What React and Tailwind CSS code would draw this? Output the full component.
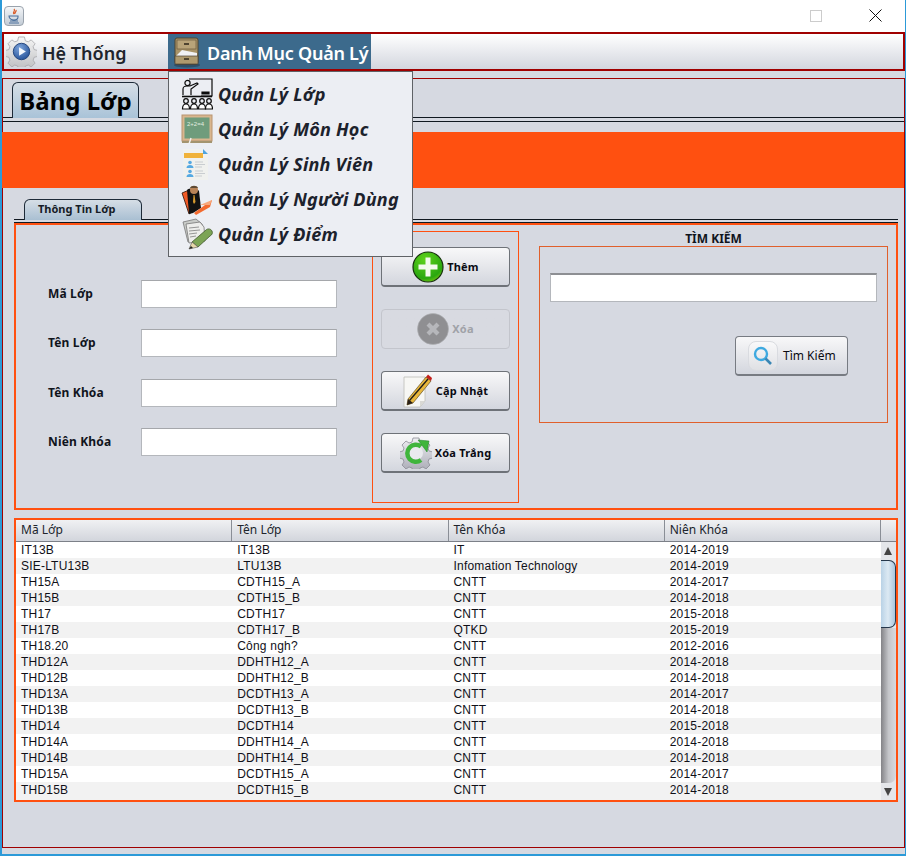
import React from "react";

const rows = [
  ["IT13B", "IT13B", "IT", "2014-2019"],
  ["SIE-LTU13B", "LTU13B", "Infomation Technology", "2014-2019"],
  ["TH15A", "CDTH15_A", "CNTT", "2014-2017"],
  ["TH15B", "CDTH15_B", "CNTT", "2014-2018"],
  ["TH17", "CDTH17", "CNTT", "2015-2018"],
  ["TH17B", "CDTH17_B", "QTKD", "2015-2019"],
  ["TH18.20", "Công ngh?", "CNTT", "2012-2016"],
  ["THD12A", "DDHTH12_A", "CNTT", "2014-2018"],
  ["THD12B", "DDHTH12_B", "CNTT", "2014-2018"],
  ["THD13A", "DCDTH13_A", "CNTT", "2014-2017"],
  ["THD13B", "DCDTH13_B", "CNTT", "2014-2018"],
  ["THD14", "DCDTH14", "CNTT", "2015-2018"],
  ["THD14A", "DDHTH14_A", "CNTT", "2014-2018"],
  ["THD14B", "DDHTH14_B", "CNTT", "2014-2018"],
  ["THD15A", "DCDTH15_A", "CNTT", "2014-2017"],
  ["THD15B", "DCDTH15_B", "CNTT", "2014-2018"],
];

const columns = ["Mã Lớp", "Tên Lớp", "Tên Khóa", "Niên Khóa"];
const fields = ["Mã Lớp", "Tên Lớp", "Tên Khóa", "Niên Khóa"];

const gearPath =
  "M13 1h6l1 4 3 1 3-2 4 4-2 3 1 3 4 1v6l-4 1-1 3 2 3-4 4-3-2-3 1-1 4h-6l-1-4-3-1-3 2-4-4 2-3-1-3-4-1v-6l4-1 1-3-2-3 4-4 3 2 3-1z";

const JavaIcon = () => (
  <div className="w-5 h-5 rounded-sm border border-[#9aa3ad] bg-gradient-to-b from-[#f4f6f8] to-[#c3ccd6] flex items-center justify-center">
    <svg width="14" height="16" viewBox="0 0 14 16">
      <path d="M7 1c2 2-2 3 0 5M9 2c1 2-2 2-1 4" fill="none" stroke="#d9541e" strokeWidth="1.2" />
      <path d="M2 8h9v1c0 2-2 3-4 3s-5-1-5-4z M3 13h8M2 15h10" fill="none" stroke="#4a6f9c" strokeWidth="1.1" />
    </svg>
  </div>
);

const GearPlayIcon = () => (
  <svg width="31" height="31" viewBox="0 0 32 32">
    <defs>
      <linearGradient id="gearGrey" x1="0" y1="0" x2="0" y2="1">
        <stop offset="0" stopColor="#f6f6f6" />
        <stop offset="1" stopColor="#bdbec1" />
      </linearGradient>
      <radialGradient id="playBlue" cx="0.4" cy="0.3" r="0.8">
        <stop offset="0" stopColor="#7fa6dc" />
        <stop offset="1" stopColor="#1d4a93" />
      </radialGradient>
    </defs>
    <path d={gearPath} fill="url(#gearGrey)" stroke="#a5a5a8" strokeWidth="0.8" />
    <circle cx="16" cy="16" r="8.500" fill="url(#playBlue)" stroke="#24457c" strokeWidth="1" />
    <path d="M13.500 11.500l7 4.500-7 4.500z" fill="#f5f8fd" />
  </svg>
);

const CabinetIcon = () => (
  <svg width="28" height="32" viewBox="0 0 28 32">
    <ellipse cx="14" cy="29" rx="13" ry="2.5" fill="#23394a" opacity="0.55" />
    <rect x="2" y="2" width="23" height="26" rx="2" fill="#a99468" stroke="#4f4430" />
    <rect x="4" y="4" width="19" height="9" fill="#b9a479" stroke="#6b5b3d" strokeWidth="0.7" />
    <rect x="11" y="7" width="5" height="2" fill="#4f4430" />
    <path d="M3 20l6-6 15 3v3z" fill="#f1f2f4" />
    <path d="M2 20h23v8H2z" fill="#ae9a6e" stroke="#4f4430" strokeWidth="0.7" />
    <rect x="11" y="22" width="5" height="2" fill="#4f4430" />
  </svg>
);

const TeacherIcon = () => (
  <svg width="32" height="32" viewBox="0 0 32 32" fill="none" stroke="#0c0c0c" strokeWidth="1.2">
    <path d="M8 1h23v17H20" />
    <circle cx="6.500" cy="5" r="2.600" />
    <path d="M2 17v-6c0-2 2-3 4-3h3l7-3 1 1-7 5v6" />
    <path d="M21 14h7v2h-7z" fill="#0c0c0c" />
    <path d="M1 18.500h30" strokeWidth="1.6" />
    {[5, 13, 21, 28].map((x) => (
      <g key={x}>
        <circle cx={x} cy="23" r="2.300" />
        <path d="M1.500 31c0-3 1-5 3.500-5s3.500 2 3.500 5z" fill="#fff" transform={`translate(${x - 5} 0)`} />
      </g>
    ))}
  </svg>
);

const BoardIcon = () => (
  <svg width="32" height="32" viewBox="0 0 32 32">
    <rect x="1" y="2" width="30" height="26" fill="#d9b68e" stroke="#b89470" />
    <rect x="3.500" y="4.500" width="25" height="21" fill="#6f9c7c" />
    <text x="6" y="13" fontSize="6" fill="#e3eee0" fontFamily="Liberation Sans, sans-serif">2+2=4</text>
    <path d="M1 28h30v2H1z" fill="#a3946f" />
    <path d="M8 31l2-6" stroke="#f2f2f2" strokeWidth="1.400" />
  </svg>
);

const CardIcon = () => (
  <svg width="28" height="32" viewBox="0 0 28 32">
    <path d="M2 1h20l5 5v26H2z" fill="#f0f1ee" />
    <path d="M3 5h19v5H3z" fill="#f0b23a" />
    <path d="M22 1l5 5h-5z" fill="#4ea4e0" />
    {[13, 22].map((y) => (
      <g key={y}>
        <circle cx="9" cy={y + 1.500} r="1.800" fill="#55a9e2" />
        <path d={`M5.500 ${y + 7}c0-2 1.500-3 3.500-3s3.500 1 3.500 3z`} fill="#55a9e2" />
        <path d={`M14 ${y + 1}h8M14 ${y + 3.500}h10M14 ${y + 6}h7`} stroke="#c9cdd0" strokeWidth="1" />
      </g>
    ))}
  </svg>
);

const UserFolderIcon = () => (
  <svg width="32" height="32" viewBox="0 0 32 32">
    <path d="M1 10l7-3 3 22-3 2z" fill="#f05a26" stroke="#2b1208" strokeWidth="0.8" />
    <path d="M6 7c2-2 10-2 12 1l2 17-8 5-4 1z" fill="#121212" />
    <circle cx="13" cy="7" r="4" fill="#b98458" />
    <path d="M9 5c1-3 7-3 8 0z" fill="#5d4a35" />
    <path d="M12.500 12h1l1 7-1.500 2-1-2z" fill="#d79b2f" />
    <path d="M13 30l18-13-2 7-14 8z" fill="#f36a2e" />
    <path d="M19 22l12-5-2 5z" fill="#f8a77a" />
  </svg>
);

const GradesIcon = () => (
  <svg width="32" height="32" viewBox="0 0 32 32">
    <path d="M2 4l13-3 6 5 3 14-17 4z" fill="#c9cbc8" stroke="#777" strokeWidth="0.8" />
    <path d="M5 6l14-2 4 5 1 14-16 2z" fill="#ededeb" stroke="#777" strokeWidth="0.8" />
    <path d="M8 10l10-1M8 13l11-1M8 16l8-1M9 19l6-1" stroke="#8b8b8b" strokeWidth="0.9" />
    <path d="M11 24L25 12c2-2 5-1 6 1s0 4-2 5L17 29z" fill="#7ca455" stroke="#425b2d" strokeWidth="0.8" />
    <path d="M11 24l6 5-9 2z" fill="#e6d7a8" stroke="#555" strokeWidth="0.6" />
    <path d="M8 31l2-3 2 2z" fill="#222" />
  </svg>
);

const PlusIcon = () => (
  <svg width="32" height="32" viewBox="0 0 32 32">
    <defs>
      <radialGradient id="plusGreen" cx="0.4" cy="0.25" r="0.9">
        <stop offset="0" stopColor="#5fd21c" />
        <stop offset="0.7" stopColor="#2aa70f" />
        <stop offset="1" stopColor="#a4da12" />
      </radialGradient>
    </defs>
    <circle cx="16" cy="16" r="15" fill="url(#plusGreen)" stroke="#17300e" strokeWidth="1.200" />
    <path d="M13.500 6.500h5v7h7v5h-7v7h-5v-7h-7v-5h7z" fill="#f4faee" />
  </svg>
);

const DisabledDeleteIcon = () => (
  <svg width="32" height="32" viewBox="0 0 32 32">
    <circle cx="16" cy="16" r="15.500" fill="#8f8f92" stroke="#aeb0b4" strokeWidth="0.6" />
    <path d="M9.500 12.500l3-3 3.500 3.500 3.500-3.500 3 3-3.500 3.500 3.500 3.500-3 3-3.500-3.500-3.500 3.500-3-3 3.500-3.500z" fill="#b6b7bb" />
  </svg>
);

const PencilIcon = () => (
  <svg width="30" height="34" viewBox="0 0 30 34">
    <path d="M1 3l21 0v24l-5 6H1z" fill="#f7f7f4" stroke="#bcbcb8" strokeWidth="0.8" />
    <path d="M22 27l-5 6v-6z" fill="#d9d9d5" />
    <path d="M5 25L23 3l5 4-18 22-6 2z" fill="#e8b73c" stroke="#4a3a18" strokeWidth="0.6" />
    <path d="M6.500 26.500L25 5" stroke="#1c1c1c" strokeWidth="1.300" />
    <path d="M23 3l2-2.500 4 3.500-1 3z" fill="#c3201c" />
    <path d="M4 31l1-6 5 4z" fill="#2a2118" />
  </svg>
);

const ResetIcon = () => (
  <svg width="32" height="32" viewBox="0 0 32 32">
    <defs>
      <linearGradient id="resetGrey" x1="0" y1="0" x2="0" y2="1">
        <stop offset="0" stopColor="#eeeef2" />
        <stop offset="1" stopColor="#a8a9b4" />
      </linearGradient>
    </defs>
    <path d={gearPath} fill="url(#resetGrey)" stroke="#8b8c96" strokeWidth="0.8" />
    <circle cx="16" cy="16" r="7" fill="#e9eaee" />
    <path d="M21 9.500A8.500 8.500 0 1 0 21 23" fill="none" stroke="#3fb53c" strokeWidth="4.500" />
    <path d="M18 3l11 1-2 11z" fill="#3fb53c" stroke="#1c7d27" strokeWidth="0.5" />
  </svg>
);

const SearchIcon = () => (
  <div className="w-[30px] h-[30px] rounded-lg border border-[#d9dbe0] bg-gradient-to-b from-[#f9f9fa] to-[#dfe0e4] flex items-center justify-center">
    <svg width="20" height="20" viewBox="0 0 20 20" fill="none">
      <circle cx="8" cy="8" r="6" stroke="#3ea9e0" strokeWidth="2.400" />
      <path d="M12.500 12.500l5.500 5.500" stroke="#3a86b4" strokeWidth="2.600" />
    </svg>
  </div>
);

const MenuItem = ({ icon, label }) => (
  <div className="h-[35px] flex items-center">
    <div className="w-[49px] pl-[12px] flex justify-start">{icon}</div>
    <span className="text-[18px] leading-none font-bold italic tracking-[0.2px] text-[#1c222c]">{label}</span>
  </div>
);

const ActionButton = ({ icon, label, disabled }) => (
  <button
    className={`w-[129px] h-[40px] rounded-[4px] border flex items-center justify-center gap-[3px] bg-gradient-to-b ${
      disabled
        ? "border-[#c3c5cc] from-[#d8dae1] to-[#d8dae1] text-[#a0a2a8]"
        : "border-[#6e7278] border-b-2 from-[#f8f8f9] via-[#e6e7eb] to-[#d3d6de] text-[#0a0a12]"
    }`}
  >
    {icon}
    <span className="pt-[1px] text-[11px] font-bold tracking-[0.2px]">{label}</span>
  </button>
);

const menuItems = [
  [<TeacherIcon />, "Quản Lý Lớp"],
  [<BoardIcon />, "Quản Lý Môn Học"],
  [<CardIcon />, "Quản Lý Sinh Viên"],
  [<UserFolderIcon />, "Quản Lý Người Dùng"],
  [<GradesIcon />, "Quản Lý Điểm"],
];

export default function App() {
  return (
    <div className="w-[910px] h-[858px] bg-white overflow-hidden font-['Noto_Sans',sans-serif]">
      <div className="relative w-[906px] h-[856px] border-l-2 border-r border-b-2 border-[#2c9ad8] flex flex-col">
        {/* title bar */}
        <div className="h-[32px] shrink-0 flex items-center pl-[2px] pb-[1px]">
          <JavaIcon />
          <div className="ml-auto mr-[47px] w-[12px] h-[12px] border border-[#cccccc]" />
          <svg className="mr-[23px]" width="13" height="13" viewBox="0 0 13 13">
            <path d="M.5.5l12 12M12.500.5l-12 12" stroke="#111" strokeWidth="1" />
          </svg>
        </div>

        {/* menu bar */}
        <div className="h-[39px] shrink-0 border-2 border-[#a00000] flex items-stretch bg-gradient-to-b from-white to-[#d3d6de] text-[18px] font-semibold text-[#20242c]">
          <div className="w-[164px] flex items-center pl-[2px] gap-[5px]">
            <GearPlayIcon />
            <span className="pt-[3px]">Hệ Thống</span>
          </div>
          <div className="w-[203px] bg-[#3c6a8c] flex items-center pl-[5px] gap-[6px] text-white whitespace-nowrap">
            <CabinetIcon />
            <span className="pt-[3px] tracking-[-0.25px]">Danh Mục Quản Lý</span>
          </div>
        </div>

        {/* dropdown */}
        <div className="absolute left-[166px] top-[71px] z-10 w-[245px] h-[186px] border border-[#5f6266] bg-[#eceef3] flex flex-col pt-[4px]">
          {menuItems.map(([icon, label]) => (
            <MenuItem key={label} icon={icon} label={label} />
          ))}
        </div>

        {/* body */}
        <div className="flex-1 bg-[#d6d9e1] pt-[7px] pb-[6px]">
          <div className="h-full border border-[#a00000] flex flex-col">
            {/* main tab */}
            <div className="h-[39px] shrink-0 pt-[3px] pl-[9px] border-b border-[#101820] flex items-end">
              <div className="w-[127px] h-[36px] -mb-px rounded-t-md border border-b-0 border-[#1d2a38] bg-gradient-to-b from-[#d6dee6] to-[#a9c3d8] flex items-center justify-center text-[24px] font-bold text-black">
                Bảng Lớp
              </div>
            </div>
            <div className="mt-[3px] h-px shrink-0 bg-[#101820]" />
            <div className="mt-[10px] -ml-px h-[56px] shrink-0 bg-[#ff5010]" />

            <div className="flex-1 pl-[11px] pr-[6px] pt-[10px]">
              {/* sub tab */}
              <div className="h-[22px] pl-[10px] border-b border-[#101820] flex items-end">
                <div className="w-[118px] h-[21px] -mb-px rounded-t-md border border-b-0 border-[#1d2a38] bg-gradient-to-b from-[#d6dee6] to-[#a9bfd2] flex items-center pl-[13px] pb-[2px] text-[11px] font-bold text-[#161c26]">
                  Thông Tin Lớp
                </div>
              </div>
              <div className="mt-[2px] h-px bg-[#101820]" />

              {/* form panel */}
              <div className="h-[287px] border-2 border-[#ff5010] flex">
                {/* fields */}
                <div className="w-[356px] shrink-0 pt-[55px] pl-[32px] flex flex-col gap-[21.300px]">
                  {fields.map((field) => (
                    <div key={field} className="h-[28px] flex items-center">
                      <span className="w-[93px] text-[12px] font-bold tracking-[0.15px] text-[#10141c]">{field}</span>
                      <div className="w-[196px] h-[28px] border border-[#b4b7bc] border-t-[#a5a7ab] bg-white" />
                    </div>
                  ))}
                </div>

                {/* actions */}
                <div className="w-[147px] h-[272px] mt-[6px] shrink-0 border border-[#ff5010] pt-[15px] pl-[8px] flex flex-col gap-[22px]">
                  <ActionButton icon={<PlusIcon />} label="Thêm" />
                  <ActionButton icon={<DisabledDeleteIcon />} label="Xóa" disabled />
                  <ActionButton icon={<PencilIcon />} label="Cập Nhật" />
                  <ActionButton icon={<ResetIcon />} label="Xóa Trắng" />
                </div>

                {/* search */}
                <div className="ml-[20px] w-[349px] shrink-0 flex flex-col pt-[5px]">
                  <div className="h-[16px] text-center text-[12px] leading-[17px] font-bold text-[#10141c]">TÌM KIẾM</div>
                  <div className="h-[177px] border border-[#e0602c] pt-[26px] pl-[10px] flex flex-col">
                    <div className="w-[327px] h-[29px] border border-[#b4b7bc] border-t-2 border-t-[#8d8f93] bg-white" />
                    <button className="ml-[185px] mt-[34px] w-[113px] h-[40px] rounded-[4px] border border-[#777b82] border-b-2 bg-gradient-to-b from-[#f8f8f9] via-[#e6e7eb] to-[#d3d6de] flex items-center pl-[12px] gap-[5px] text-[12px] text-[#0a0a12]">
                      <SearchIcon />
                      <span className="pt-[1px]">Tìm Kiếm</span>
                    </button>
                  </div>
                </div>
              </div>

              {/* table */}
              <div className="mt-[8px] h-[284px] border-2 border-[#ff5010] flex flex-col bg-[#f2f2f2]">
                <div className="h-[22px] shrink-0 flex border-b border-[#7c8088] bg-gradient-to-b from-[#f0f1f3] to-[#d2d5dc] text-[12px] text-[#20242c]">
                  {columns.map((col) => (
                    <div key={col} className="w-[216.250px] shrink-0 border-r border-[#8a8e96] pl-[5px] leading-[20px]">
                      {col}
                    </div>
                  ))}
                  <div className="flex-1" />
                </div>
                <div className="flex-1 flex overflow-hidden">
                  <div className="w-[865px] shrink-0 font-['Liberation_Sans',sans-serif] text-[12px] tracking-[0.2px] text-[#101018]">
                    {rows.map((row, i) => (
                      <div key={row[0]} className={`h-[16px] flex ${i % 2 === 0 ? "bg-white" : "bg-[#f2f2f2]"}`}>
                        {row.map((cell, j) => (
                          <div key={j} className="w-[216.250px] shrink-0 pl-[5px] leading-[16px] whitespace-nowrap">
                            {cell}
                          </div>
                        ))}
                      </div>
                    ))}
                  </div>
                  {/* scrollbar */}
                  <div className="flex-1 flex flex-col bg-[#e4e6ea]">
                    <div className="h-[18px] shrink-0 flex items-center justify-center pr-[2px]">
                      <div className="w-0 h-0 border-x-[4px] border-x-transparent border-b-[8px] border-b-[#444]" />
                    </div>
                    <div className="h-[68px] shrink-0 rounded-r-[7px] border border-l-0 border-[#24364a] bg-gradient-to-r from-[#b9d2e6] via-[#dce9f3] to-[#a9c6dd]" />
                    <div className="flex-1 rounded-br-[7px] bg-gradient-to-r from-[#838387] via-[#c4c5c9] to-[#d8d9dd]" />
                    <div className="h-[17px] shrink-0 flex items-center justify-center pr-[2px]">
                      <div className="w-0 h-0 border-x-[4px] border-x-transparent border-t-[8px] border-t-[#444]" />
                    </div>
                  </div>
                </div>
              </div>
            </div>
          </div>
        </div>
      </div>
    </div>
  );
}
